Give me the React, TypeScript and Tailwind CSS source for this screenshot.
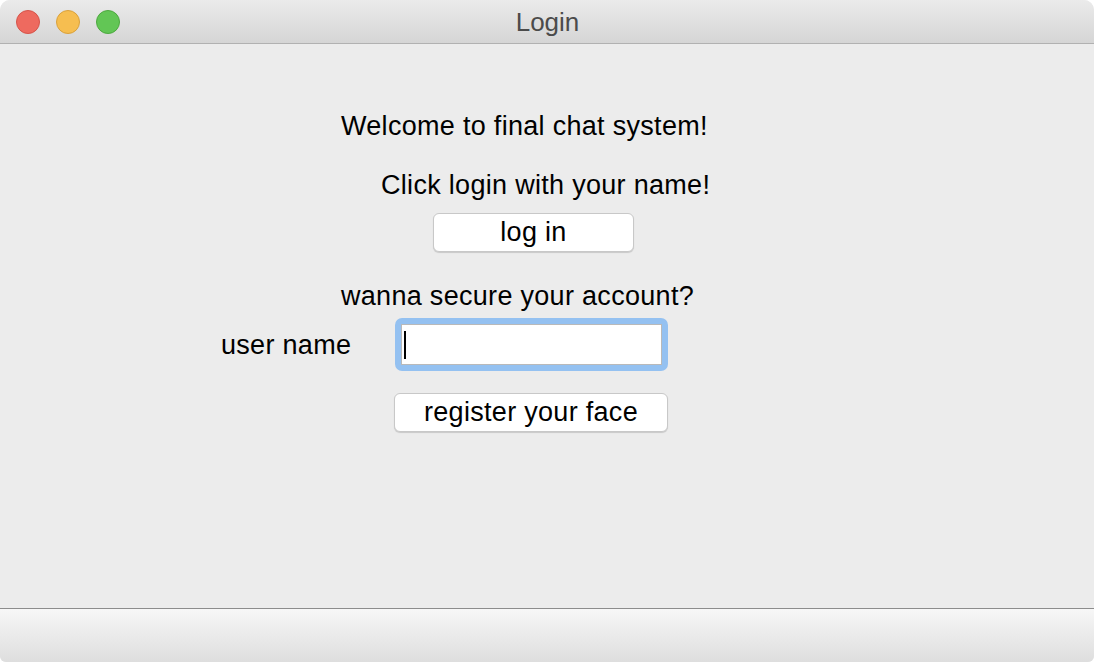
import React from 'react';

const font = { fontFamily: '"Liberation Sans", Arial, sans-serif' };

function TrafficLights() {
  return (
    <div className="flex items-center gap-[16px] pl-[16px]">
      <span className="block w-[24px] h-[24px] rounded-full bg-[#ee6a5f] border border-[#d5544a]" />
      <span className="block w-[24px] h-[24px] rounded-full bg-[#f6be50] border border-[#d9a13c]" />
      <span className="block w-[24px] h-[24px] rounded-full bg-[#62c655] border border-[#4da83f]" />
    </div>
  );
}

export default function App() {
  return (
    <div className="w-[1094px] h-[662px] bg-white" style={font}>
      <div className="w-full h-full flex flex-col rounded-t-[10px] rounded-b-[6px] overflow-hidden bg-[#ececec]">
        {/* title bar */}
        <div className="relative h-[44px] shrink-0 flex items-center bg-gradient-to-b from-[#ebebeb] to-[#d5d5d5] border-b border-[#b1b1b1]">
          <TrafficLights />
          <div className="absolute inset-0 flex items-center justify-center pl-[1px] pt-[2px] text-[26px] text-[#4b4b4b]">
            Login
          </div>
        </div>

        {/* content */}
        <div className="flex-1 flex flex-col text-black text-[27px] leading-[28px] tracking-[0.3px]">
          <div className="pl-[341px] pt-[68px]">Welcome to final chat system!</div>
          <div className="pl-[381px] pt-[31px]">Click login with your name!</div>
          <div className="pl-[433px] pt-[14px]">
            <button className="w-[201px] h-[39px] bg-white rounded-[6px] border border-[#c8c8c8] shadow-[0_1px_1px_rgba(0,0,0,0.15)] text-[27px] leading-none tracking-[0.3px]">
              log in
            </button>
          </div>
          <div className="pl-[341px] pt-[30px]">wanna secure your account?</div>
          <div className="flex items-center pt-[8px]">
            <div className="pl-[221px] w-[395px]">user name</div>
            <div className="w-[273px] h-[53px] rounded-[7px] bg-[#94c1f1] p-[6px]">
              <div className="w-full h-full bg-white border border-[#b9b9b9] flex items-center pl-[2px]">
                <span className="block w-[2px] h-[28px] bg-black" />
              </div>
            </div>
          </div>
          <div className="pl-[394px] pt-[22px]">
            <button className="w-[274px] h-[39px] bg-white rounded-[6px] border border-[#c8c8c8] shadow-[0_1px_1px_rgba(0,0,0,0.15)] text-[27px] leading-none tracking-[0.3px]">
              register your face
            </button>
          </div>
        </div>

        {/* bottom bar */}
        <div className="h-[54px] shrink-0 border-t border-[#8c8c8c] bg-gradient-to-b from-[#f7f7f7] to-[#dedede]" />
      </div>
    </div>
  );
}
